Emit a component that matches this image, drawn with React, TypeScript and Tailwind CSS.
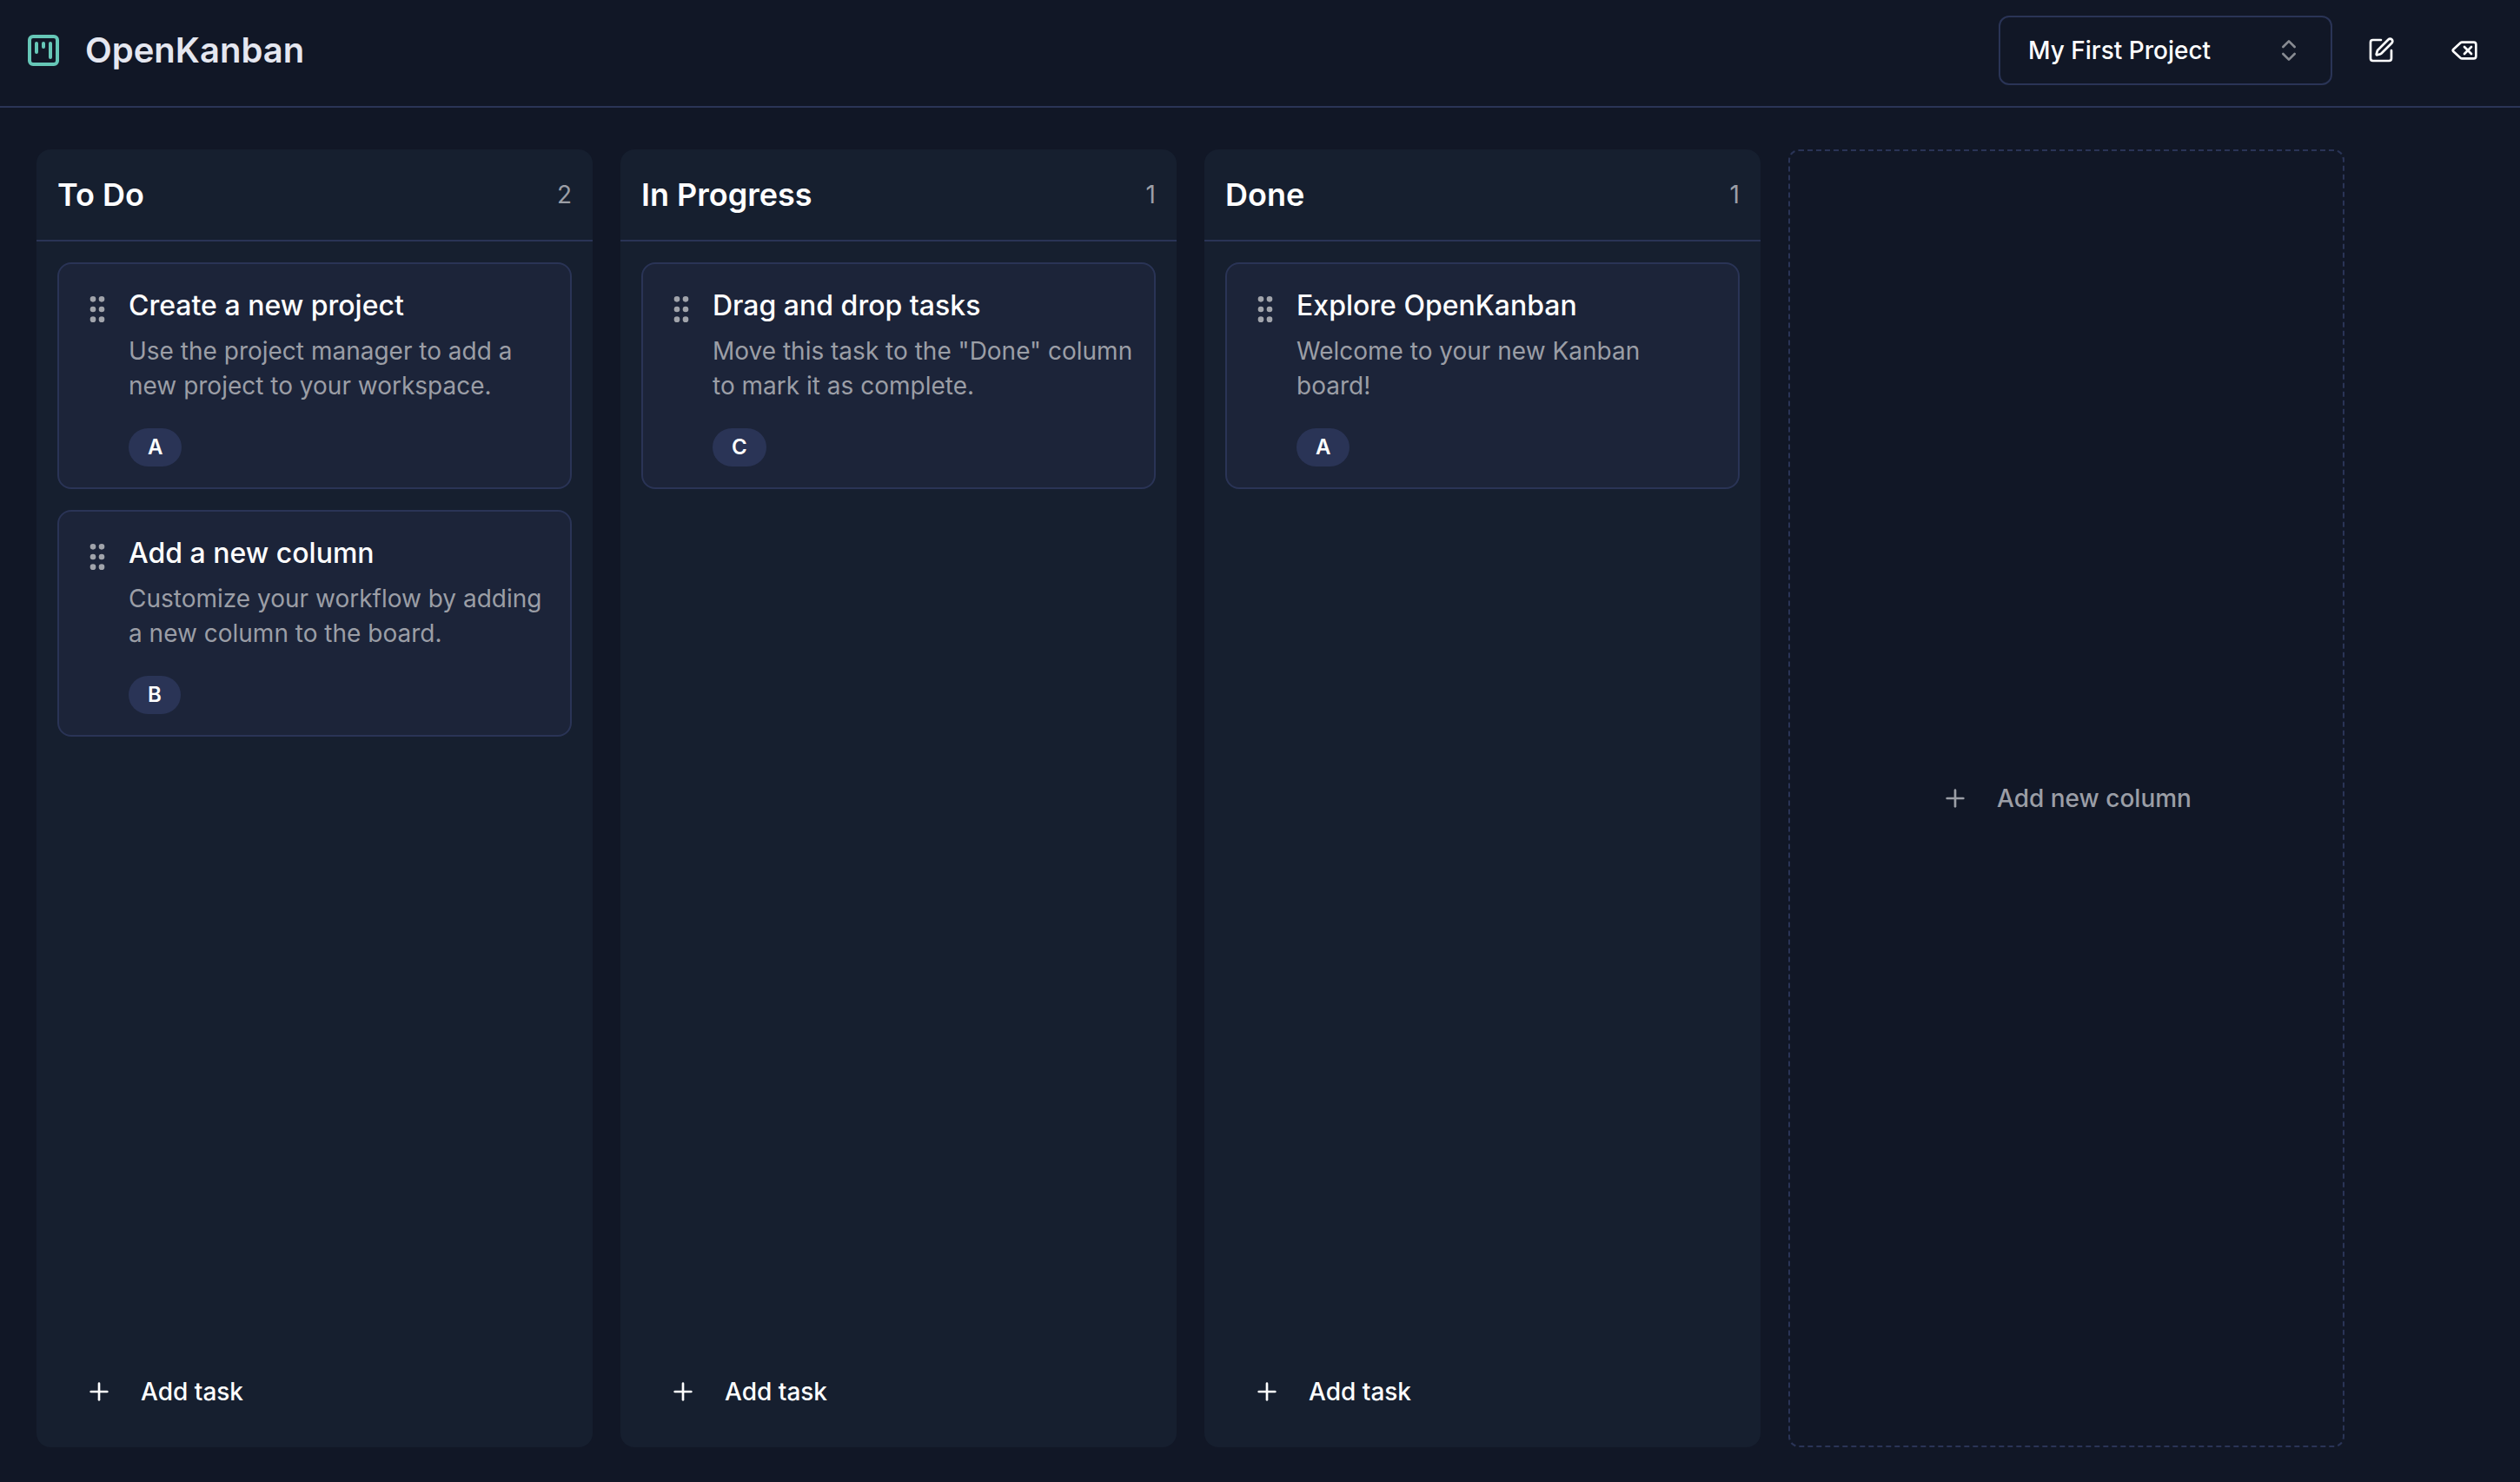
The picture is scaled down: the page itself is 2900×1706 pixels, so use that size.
import React from 'react';
import { ChevronsUpDown, Delete, GripVertical, Plus, SquarePen } from 'lucide-react';

type Task = {
  id: string;
  title: string;
  description: string;
  tag: string;
};

type Column = {
  id: string;
  title: string;
  tasks: Task[];
};

const columns: Column[] = [
  {
    id: 'todo',
    title: 'To Do',
    tasks: [
      {
        id: 'task-1',
        title: 'Create a new project',
        description: 'Use the project manager to add a new project to your workspace.',
        tag: 'A',
      },
      {
        id: 'task-2',
        title: 'Add a new column',
        description: 'Customize your workflow by adding a new column to the board.',
        tag: 'B',
      },
    ],
  },
  {
    id: 'in-progress',
    title: 'In Progress',
    tasks: [
      {
        id: 'task-3',
        title: 'Drag and drop tasks',
        description: 'Move this task to the "Done" column to mark it as complete.',
        tag: 'C',
      },
    ],
  },
  {
    id: 'done',
    title: 'Done',
    tasks: [
      {
        id: 'task-4',
        title: 'Explore OpenKanban',
        description: 'Welcome to your new Kanban board!',
        tag: 'A',
      },
    ],
  },
];

const Logo: React.FC = () => (
  <svg
    viewBox="0 0 36 36"
    fill="none"
    stroke="currentColor"
    strokeWidth={4}
    strokeLinecap="round"
    className="size-9 text-[#66c7b7]"
    aria-hidden="true"
  >
    <rect x="2" y="2" width="32" height="32" rx="4" />
    <path d="M10 10v10M18 10v4M26 10v16" />
  </svg>
);

const Header: React.FC = () => (
  <header className="flex items-center justify-between border-b-2 border-[#2a3456] pt-[18px] pr-6 pb-6 pl-8">
    <div className="flex items-center gap-[30px]">
      <Logo />
      <h1 className="text-[40px] leading-12 font-semibold text-[#e5e7f0]">OpenKanban</h1>
    </div>

    <div className="flex items-center gap-4">
      <div className="relative w-96">
        <select
          aria-label="Project"
          className="h-20 w-full appearance-none rounded-xl border-2 border-[#2a3456] bg-transparent px-8 text-[28px] leading-10 font-medium text-white"
        >
          <option>My First Project</option>
        </select>
        <ChevronsUpDown className="pointer-events-none absolute top-6 right-[34px] size-8 text-[#888b92]" />
      </div>
      <button type="button" aria-label="Edit project" className="flex size-20 items-center justify-center text-white">
        <SquarePen className="size-8" />
      </button>
      <button type="button" aria-label="Delete project" className="flex size-20 items-center justify-center text-white">
        <Delete className="size-8" />
      </button>
    </div>
  </header>
);

const TaskCard: React.FC<{ task: Task }> = ({ task }) => (
  <li className="flex items-start gap-4 rounded-2xl border-2 border-[#2a3456] bg-[#1c2439] p-6">
    <GripVertical className="mt-2 size-10 shrink-0 text-[#a1a4ab]" />
    <div className="min-w-0 flex-1">
      <h3 className="text-[32px] leading-12 font-medium text-white">{task.title}</h3>
      <p className="mt-2 text-[28px] leading-10 text-[#9b9ea6]">{task.description}</p>
      <span className="mt-[29px] flex h-11 w-fit items-center rounded-full bg-[#2a3456] px-[22px] text-2xl font-semibold text-white">
        {task.tag}
      </span>
    </div>
  </li>
);

const BoardColumn: React.FC<{ column: Column }> = ({ column }) => (
  <section className="flex w-[640px] shrink-0 flex-col rounded-2xl bg-[#161f2f]">
    <div className="flex items-center justify-between border-b-2 border-[#2a3456] px-6 py-7">
      <h2 className="text-4xl leading-12 font-semibold text-white">{column.title}</h2>
      <span className="text-[28px] leading-10 text-[#9b9ea6]">{column.tasks.length}</span>
    </div>
    <ul className="flex flex-1 flex-col gap-6 p-6">
      {column.tasks.map((task) => (
        <TaskCard key={task.id} task={task} />
      ))}
    </ul>
    <div className="p-6">
      <button type="button" className="flex h-20 w-full items-center gap-8 px-8 text-[28px] font-medium text-white">
        <Plus className="size-8" />
        Add task
      </button>
    </div>
  </section>
);

export default function App() {
  return (
    <div className="flex min-h-screen flex-col bg-[#111726] font-['Inter',sans-serif]">
      <Header />
      <main className="flex flex-1 gap-8 overflow-x-auto px-[42px] pt-12 pb-10">
        {columns.map((column) => (
          <BoardColumn key={column.id} column={column} />
        ))}
        <button
          type="button"
          className="flex w-[640px] shrink-0 items-center justify-center gap-8 rounded-xl border-2 border-dashed border-[#2a3456] text-[28px] font-medium text-[#9b9ea6]"
        >
          <Plus className="size-8" />
          Add new column
        </button>
      </main>
    </div>
  );
}
